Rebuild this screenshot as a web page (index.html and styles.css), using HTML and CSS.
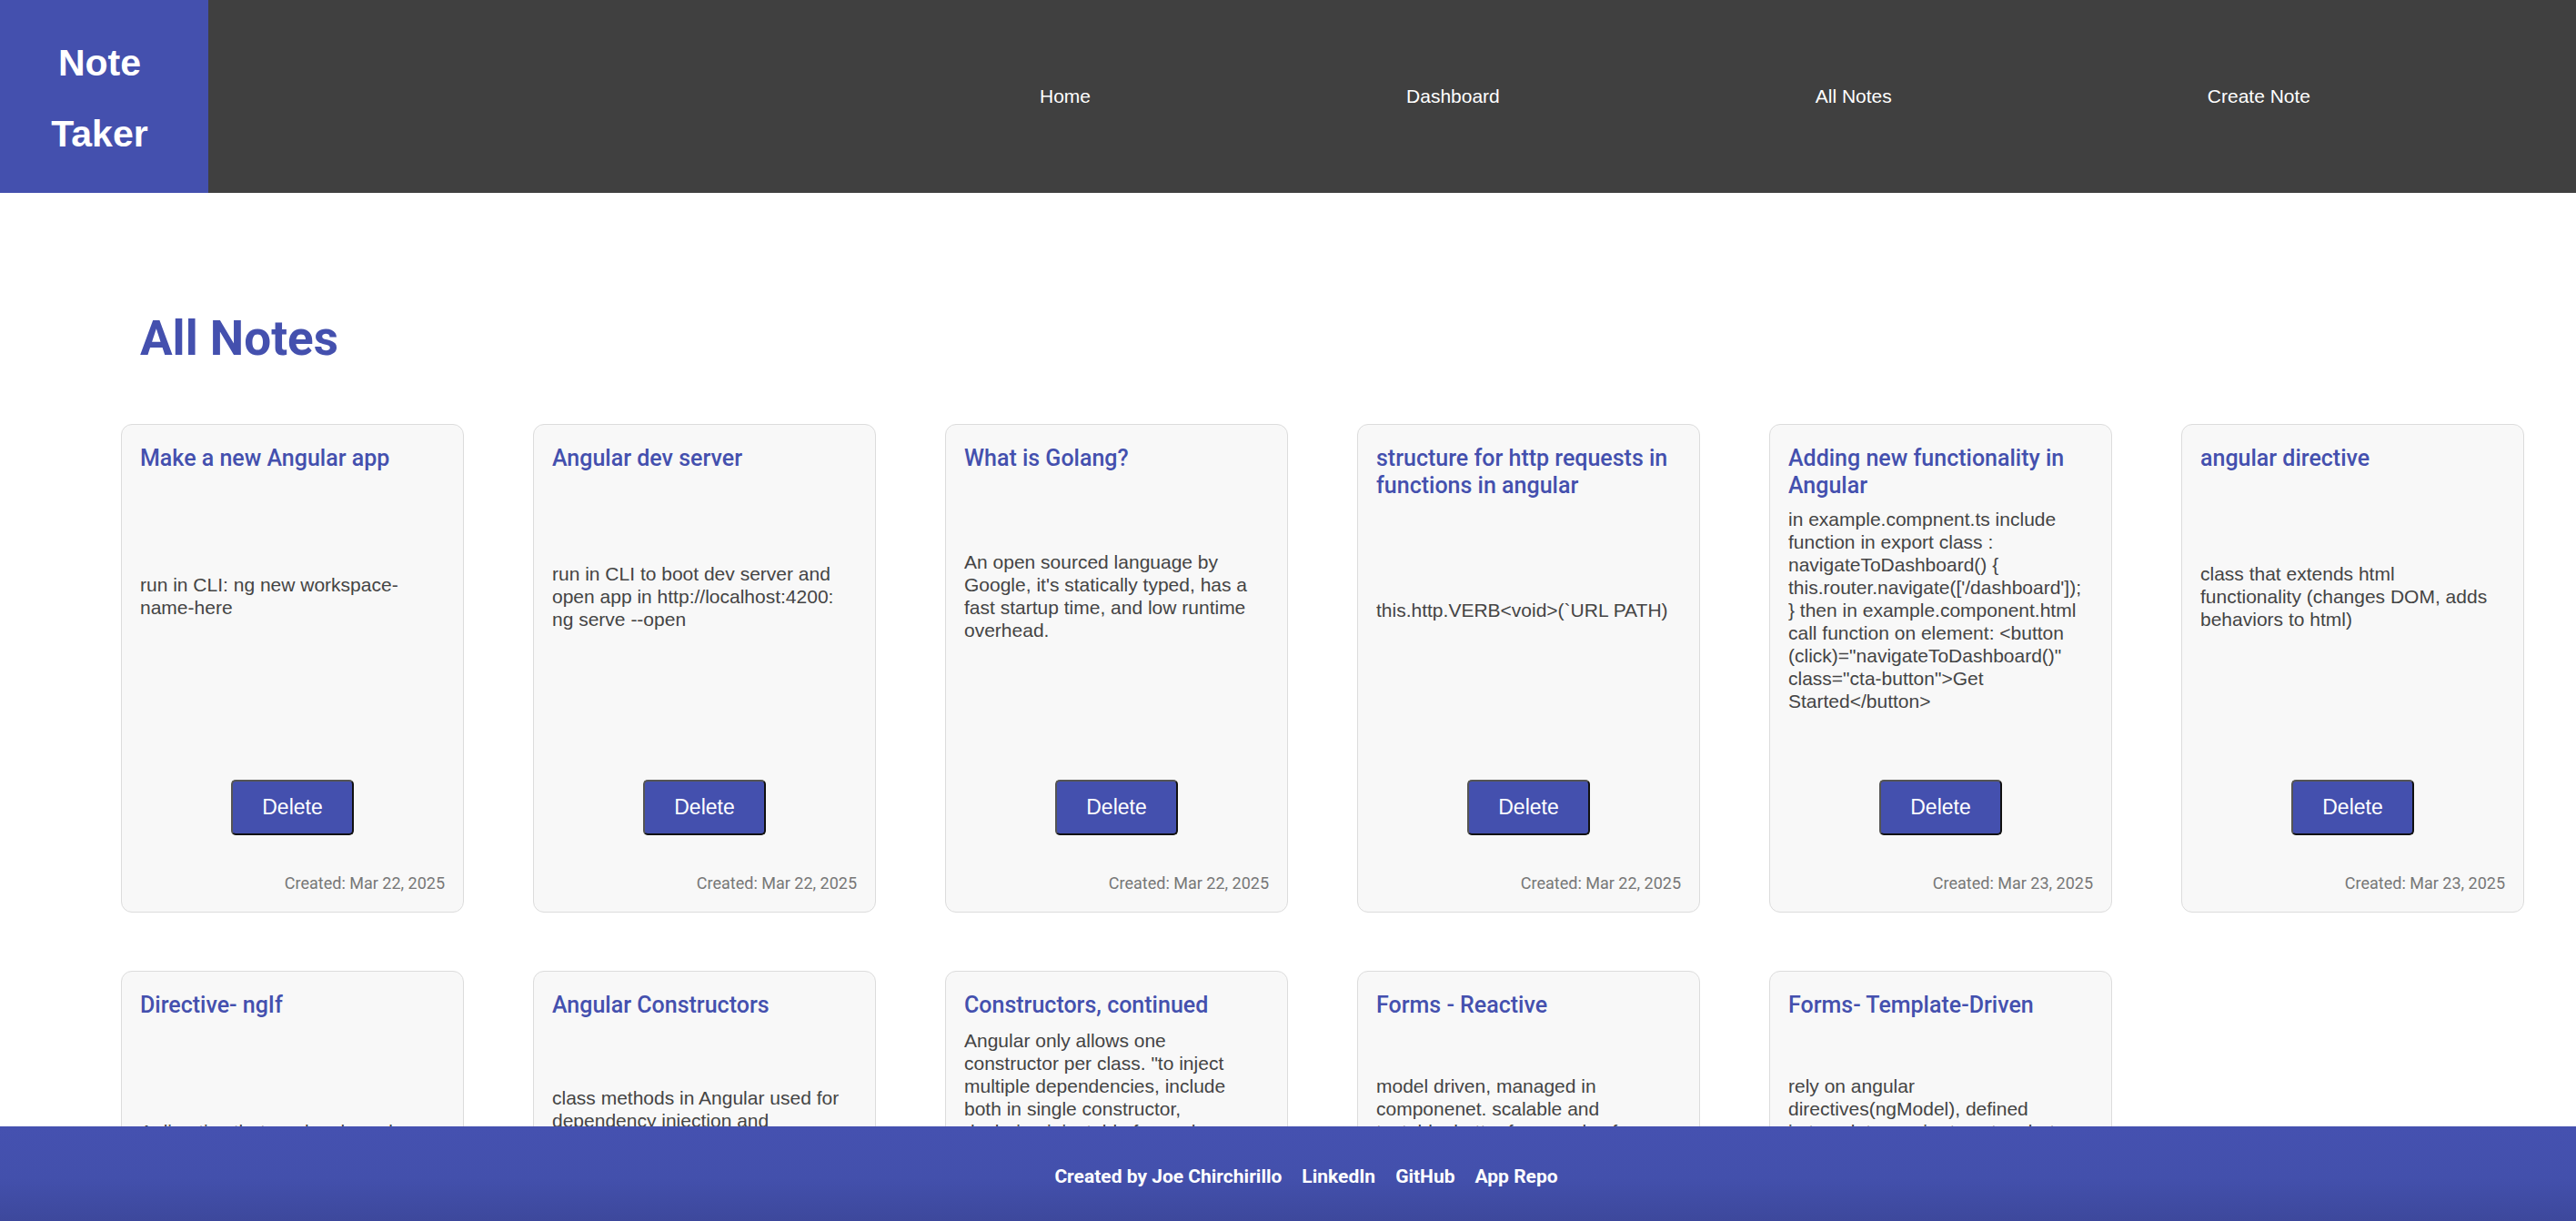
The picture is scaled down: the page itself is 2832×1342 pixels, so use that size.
FILE: index.html
```html
<!DOCTYPE html>
<html lang="en">
<head>
<meta charset="utf-8">
<title>Note Taker</title>
<link rel="stylesheet" href="styles.css">
</head>
<body>
<header class="topbar">
  <div class="logo"><span class="logo-text">Note Taker</span></div>
  <nav class="nav">
    <a class="nav-link" href="#">Home</a>
    <a class="nav-link" href="#">Dashboard</a>
    <a class="nav-link" href="#">All Notes</a>
    <a class="nav-link" href="#">Create Note</a>
  </nav>
</header>

<main class="page">
  <h1 class="page-title">All Notes</h1>
  <div class="notes-grid">
    <article class="note-card">
      <h2 class="note-title">Make a new Angular app</h2>
      <div class="note-body"><p>run in CLI: ng new workspace-name-here</p></div>
      <button class="delete-btn">Delete</button>
      <p class="note-date">Created: Mar 22, 2025</p>
    </article>
    <article class="note-card">
      <h2 class="note-title">Angular dev server</h2>
      <div class="note-body"><p>run in CLI to boot dev server and open app in http://localhost:4200: ng serve --open</p></div>
      <button class="delete-btn">Delete</button>
      <p class="note-date">Created: Mar 22, 2025</p>
    </article>
    <article class="note-card">
      <h2 class="note-title">What is Golang?</h2>
      <div class="note-body"><p>An open sourced language by Google, it's statically typed, has a fast startup time, and low runtime overhead.</p></div>
      <button class="delete-btn">Delete</button>
      <p class="note-date">Created: Mar 22, 2025</p>
    </article>
    <article class="note-card">
      <h2 class="note-title">structure for http requests in functions in angular</h2>
      <div class="note-body"><p>this.http.VERB&lt;void&gt;(`URL PATH)</p></div>
      <button class="delete-btn">Delete</button>
      <p class="note-date">Created: Mar 22, 2025</p>
    </article>
    <article class="note-card">
      <h2 class="note-title">Adding new functionality in Angular</h2>
      <div class="note-body"><p>in example.compnent.ts include function in export class : navigateToDashboard() { this.router.navigate(['/dashboard']); } then in example.component.html call function on element: &lt;button (click)="navigateToDashboard()" class="cta-button"&gt;Get Started&lt;/button&gt;</p></div>
      <button class="delete-btn">Delete</button>
      <p class="note-date">Created: Mar 23, 2025</p>
    </article>
    <article class="note-card">
      <h2 class="note-title">angular directive</h2>
      <div class="note-body"><p>class that extends html functionality (changes DOM, adds behaviors to html)</p></div>
      <button class="delete-btn">Delete</button>
      <p class="note-date">Created: Mar 23, 2025</p>
    </article>

    <article class="note-card">
      <h2 class="note-title">Directive- ngIf</h2>
      <div class="note-body"><p>A directive that renders based on a condition (true or false)</p></div>
      <button class="delete-btn">Delete</button>
      <p class="note-date">Created: Mar 23, 2025</p>
    </article>
    <article class="note-card">
      <h2 class="note-title">Angular Constructors</h2>
      <div class="note-body"><p>class methods in Angular used for dependency injection and initializing class members. runs once when the component is created.</p></div>
      <button class="delete-btn">Delete</button>
      <p class="note-date">Created: Mar 23, 2025</p>
    </article>
    <article class="note-card">
      <h2 class="note-title">Constructors, continued</h2>
      <div class="note-body"><p>Angular only allows one constructor per class. "to inject multiple dependencies, include both in single constructor, declaring injectable for each: constructor(private http: HttpClient, private router: Router) {}" parameters marked private or public become class properties automatically.</p></div>
      <button class="delete-btn">Delete</button>
      <p class="note-date">Created: Mar 23, 2025</p>
    </article>
    <article class="note-card">
      <h2 class="note-title">Forms - Reactive</h2>
      <div class="note-body"><p>model driven, managed in componenet. scalable and testable, better for complex forms. uses FormGroup and FormControl, import ReactiveFormsModule into the component.</p></div>
      <button class="delete-btn">Delete</button>
      <p class="note-date">Created: Mar 24, 2025</p>
    </article>
    <article class="note-card">
      <h2 class="note-title">Forms- Template-Driven</h2>
      <div class="note-body"><p>rely on angular directives(ngModel), defined in&nbsp;template, easier to set up but harder to scale and test. import FormsModule and bind inputs with [(ngModel)].</p></div>
      <button class="delete-btn">Delete</button>
      <p class="note-date">Created: Mar 24, 2025</p>
    </article>
  </div>
</main>

<footer class="site-footer">
  <div class="footer-inner">
    <span class="footer-credit">Created by Joe Chirchirillo</span>
    <a class="footer-link" href="#">LinkedIn</a>
    <a class="footer-link" href="#">GitHub</a>
    <a class="footer-link" href="#">App Repo</a>
  </div>
</footer>
</body>
</html>
```

FILE: styles.css
```css
html, body {
  margin: 0;
  padding: 0;
}

body {
  background: #ffffff;
  font-family: "Liberation Sans", Arial, sans-serif;
  color: #444444;
}

/* ---------- header ---------- */
.topbar {
  display: flex;
  height: 212px;
  background: #404040;
}

.logo {
  width: 229px;
  flex: none;
  background: #4450ae;
  color: #ffffff;
  display: flex;
  align-items: center;
  justify-content: center;
  box-sizing: border-box;
  padding: 4px 10px 0 0;
}

.logo-text {
  width: min-content;
  text-align: center;
  font-family: "Liberation Sans", Arial, sans-serif;
  font-weight: 700;
  font-size: 41px;
  line-height: 78px;
}

.nav {
  flex: 1;
  display: flex;
  align-items: center;
  gap: 347px;
  padding-left: 914px;
}

.nav-link {
  color: #ffffff;
  text-decoration: none;
  font-family: "Liberation Sans", Arial, sans-serif;
  font-size: 21px;
  white-space: nowrap;
}

/* ---------- main ---------- */
.page {
  padding: 128px 0 220px 133px;
}

.page-title {
  margin: 0 0 62px;
  padding-left: 21px;
  font-family: Roboto, "Liberation Sans", sans-serif;
  font-weight: 700;
  font-size: 53px;
  line-height: 64px;
  color: #4450ae;
}

.notes-grid {
  display: grid;
  grid-template-columns: repeat(6, 377px);
  column-gap: 76px;
  row-gap: 64px;
}

.note-card {
  box-sizing: border-box;
  height: 537px;
  display: flex;
  flex-direction: column;
  padding: 22px 20px 21px 20px;
  background: #f8f8f8;
  border: 1px solid #dcdcdc;
  border-radius: 12px;
}

.note-title {
  margin: 0;
  font-family: Roboto, "Liberation Sans", sans-serif;
  font-weight: 500;
  font-size: 25px;
  line-height: 30px;
  color: #4450ae;
}

.note-body {
  flex: 1;
  min-height: 0;
  display: flex;
  flex-direction: column;
  justify-content: center;
  padding-right: 7px;
}

.note-body p {
  margin: 0;
  font-family: "Liberation Sans", Arial, sans-serif;
  font-size: 21px;
  line-height: 25px;
  color: #444444;
}

.delete-btn {
  align-self: center;
  margin-top: 66px;
  padding: 15px 32px;
  font-family: "Liberation Sans", Arial, sans-serif;
  font-size: 23px;
  line-height: normal;
  color: #ffffff;
  background: #4450ae;
  border-width: 2px;
  border-style: solid;
  border-color: #555555 #111111 #111111 #555555;
  border-radius: 5px;
  cursor: pointer;
}

.note-date {
  margin: 42px 0 0;
  text-align: right;
  font-family: Roboto, "Liberation Sans", sans-serif;
  font-size: 18px;
  line-height: 21px;
  color: #777777;
}

/* ---------- footer ---------- */
.site-footer {
  position: fixed;
  left: 0;
  right: 0;
  bottom: 0;
  height: 104px;
  display: flex;
  align-items: center;
  justify-content: center;
  background: linear-gradient(to bottom, #4551b0 0%, #4350ac 55%, #3d489c 100%);
}

.footer-inner {
  display: flex;
  align-items: baseline;
  gap: 22px;
  padding-left: 40px;
  padding-top: 6px;
}

.footer-credit,
.footer-link {
  font-family: Roboto, "Liberation Sans", sans-serif;
  font-weight: 700;
  font-size: 21px;
  color: #ffffff;
  text-decoration: none;
}
```
